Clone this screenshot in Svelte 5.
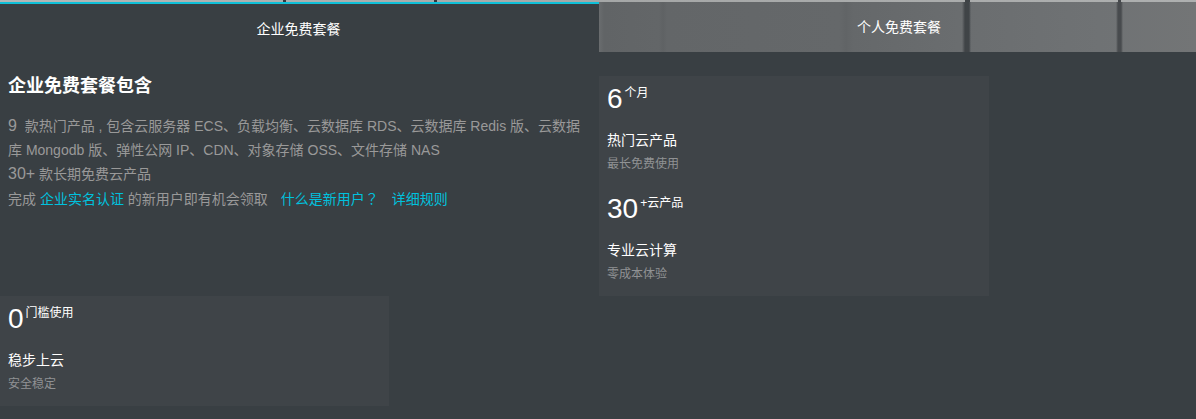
<script>
  // tabs on top, then two columns of plan details
  const leftStats = [{ num: '0', unit: '门槛使用', title: '稳步上云', sub: '安全稳定' }];
  const rightStats = [
    { num: '6', unit: '个月', title: '热门云产品', sub: '最长免费使用' },
    { num: '30', unit: '+云产品', title: '专业云计算', sub: '零成本体验' }
  ];
</script>

{#snippet stat(s)}
  <div class="stat">
    <div class="figure"><span class="num">{s.num}</span><span class="unit">{s.unit}</span></div>
    <div class="title">{s.title}</div>
    <div class="sub">{s.sub}</div>
  </div>
{/snippet}

<div class="page">
  <div class="tabs">
    <div class="tab active">企业免费套餐</div>
    <div class="tab other">个人免费套餐</div>
  </div>

  <div class="columns">
    <div class="col left">
      <div class="intro">
        <h2>企业免费套餐包含</h2>
        <p class="big"><span class="n">9</span>&nbsp; 款热门产品 , 包含云服务器 ECS、负载均衡、云数据库 RDS、云数据库 Redis 版、云数据库 Mongodb 版、弹性公网 IP、CDN、对象存储 OSS、文件存储 NAS</p>
        <p class="big"><span class="n">30+</span> 款长期免费云产品</p>
        <p>完成 <a href="#a">企业实名认证</a> 的新用户即有机会领取<a class="gap" href="#b">什么是新用户<span class="mark">？</span></a><a class="gap" href="#c">详细规则</a></p>
      </div>
      <div class="card">
        {#each leftStats as s}
          {@render stat(s)}
        {/each}
      </div>
    </div>

    <div class="col right">
      <div class="card">
        {#each rightStats as s}
          {@render stat(s)}
        {/each}
      </div>
    </div>
  </div>
</div>

<style>
  :global(body) {
    margin: 0;
    background: #393f43;
  }

  .page {
    height: 419px;
    background: #393f43;
    font-family: "Liberation Sans", "Noto Sans CJK SC", sans-serif;
    overflow: hidden;
  }

  /* the photo behind the tabs is faked with gradients */
  .tabs {
    display: grid;
    grid-template-columns: 599px 1fr;
    height: 52px;
    background-color: #a9abab;
    background-image:
      linear-gradient(90deg,
        transparent 283px, #33383c 283px, #33383c 286px, transparent 286px,
        transparent 434px, #33383c 434px, #33383c 437px, transparent 437px,
        transparent 965px, #3f4346 965px, #3f4346 970px, transparent 970px,
        transparent 1118px, #46494c 1118px, #46494c 1121px, transparent 1121px),
      linear-gradient(90deg, #b4b6b6, #a5a7a7 50%, #aeb0b0);
    background-size: 100% 2px;
    background-repeat: no-repeat;
  }

  .tab {
    display: flex;
    align-items: center;
    justify-content: center;
    color: #fff;
    font-size: 14px;
  }

  .active {
    margin-top: 2px;
    padding-right: 2px;
    border-top: 2px solid #0fc0d8;
    background: #393f43;
  }

  .other {
    margin-top: 2px;
    padding-bottom: 3px;
    padding-left: 3px;
    background-color: #696c6e;
    background-image:
      linear-gradient(90deg,
        transparent 363px, #404447 366px, #404447 370px, transparent 372px,
        transparent 517px, #484b4e 519px, #484b4e 522px, transparent 524px),
      linear-gradient(90deg,
        #6a6d6f 0, #616466 5px, #636668 60px, #5f6264 64px, #636668 68px,
        #65686a 240px, #616466 247px, #65686a 254px,
        #6b6e70 380px, #6f7274 500px, #737576 100%);
  }

  .columns {
    display: grid;
    grid-template-columns: 599px 1fr;
  }

  .intro {
    height: 244px;
    padding: 23px 8px 0;
    box-sizing: border-box;
  }

  h2 {
    margin: 0 0 17px;
    font-size: 18px;
    line-height: 22px;
    font-weight: 700;
    color: #fff;
  }

  p {
    margin: 0;
    font-size: 14px;
    line-height: 24px;
    color: #999;
  }

  .n {
    font-size: 16px;
  }

  a {
    color: #00c1de;
    text-decoration: none;
  }

  .gap {
    margin-left: 13px;
  }

  /* TC face centres the full-width question mark */
  .mark {
    font-family: "Noto Sans CJK TC", sans-serif;
  }

  .right {
    padding-top: 24px;
  }

  .card {
    width: 390px;
    background: #3f4448;
  }

  .left .card {
    width: 389px;
  }

  .stat {
    height: 110px;
    padding: 6px 8px 0;
    box-sizing: border-box;
  }

  .figure {
    display: flex;
    align-items: flex-start;
    height: 44px;
  }

  .num {
    font-size: 28px;
    line-height: 34px;
    color: #fff;
  }

  .unit {
    margin-left: 2px;
    padding-top: 1px;
    font-size: 12px;
    line-height: 20px;
    color: #fff;
  }

  .title {
    margin-top: 2px;
    font-size: 14px;
    line-height: 24px;
    color: #fff;
  }

  .sub {
    font-size: 12px;
    line-height: 24px;
    color: #909294;
  }
</style>
